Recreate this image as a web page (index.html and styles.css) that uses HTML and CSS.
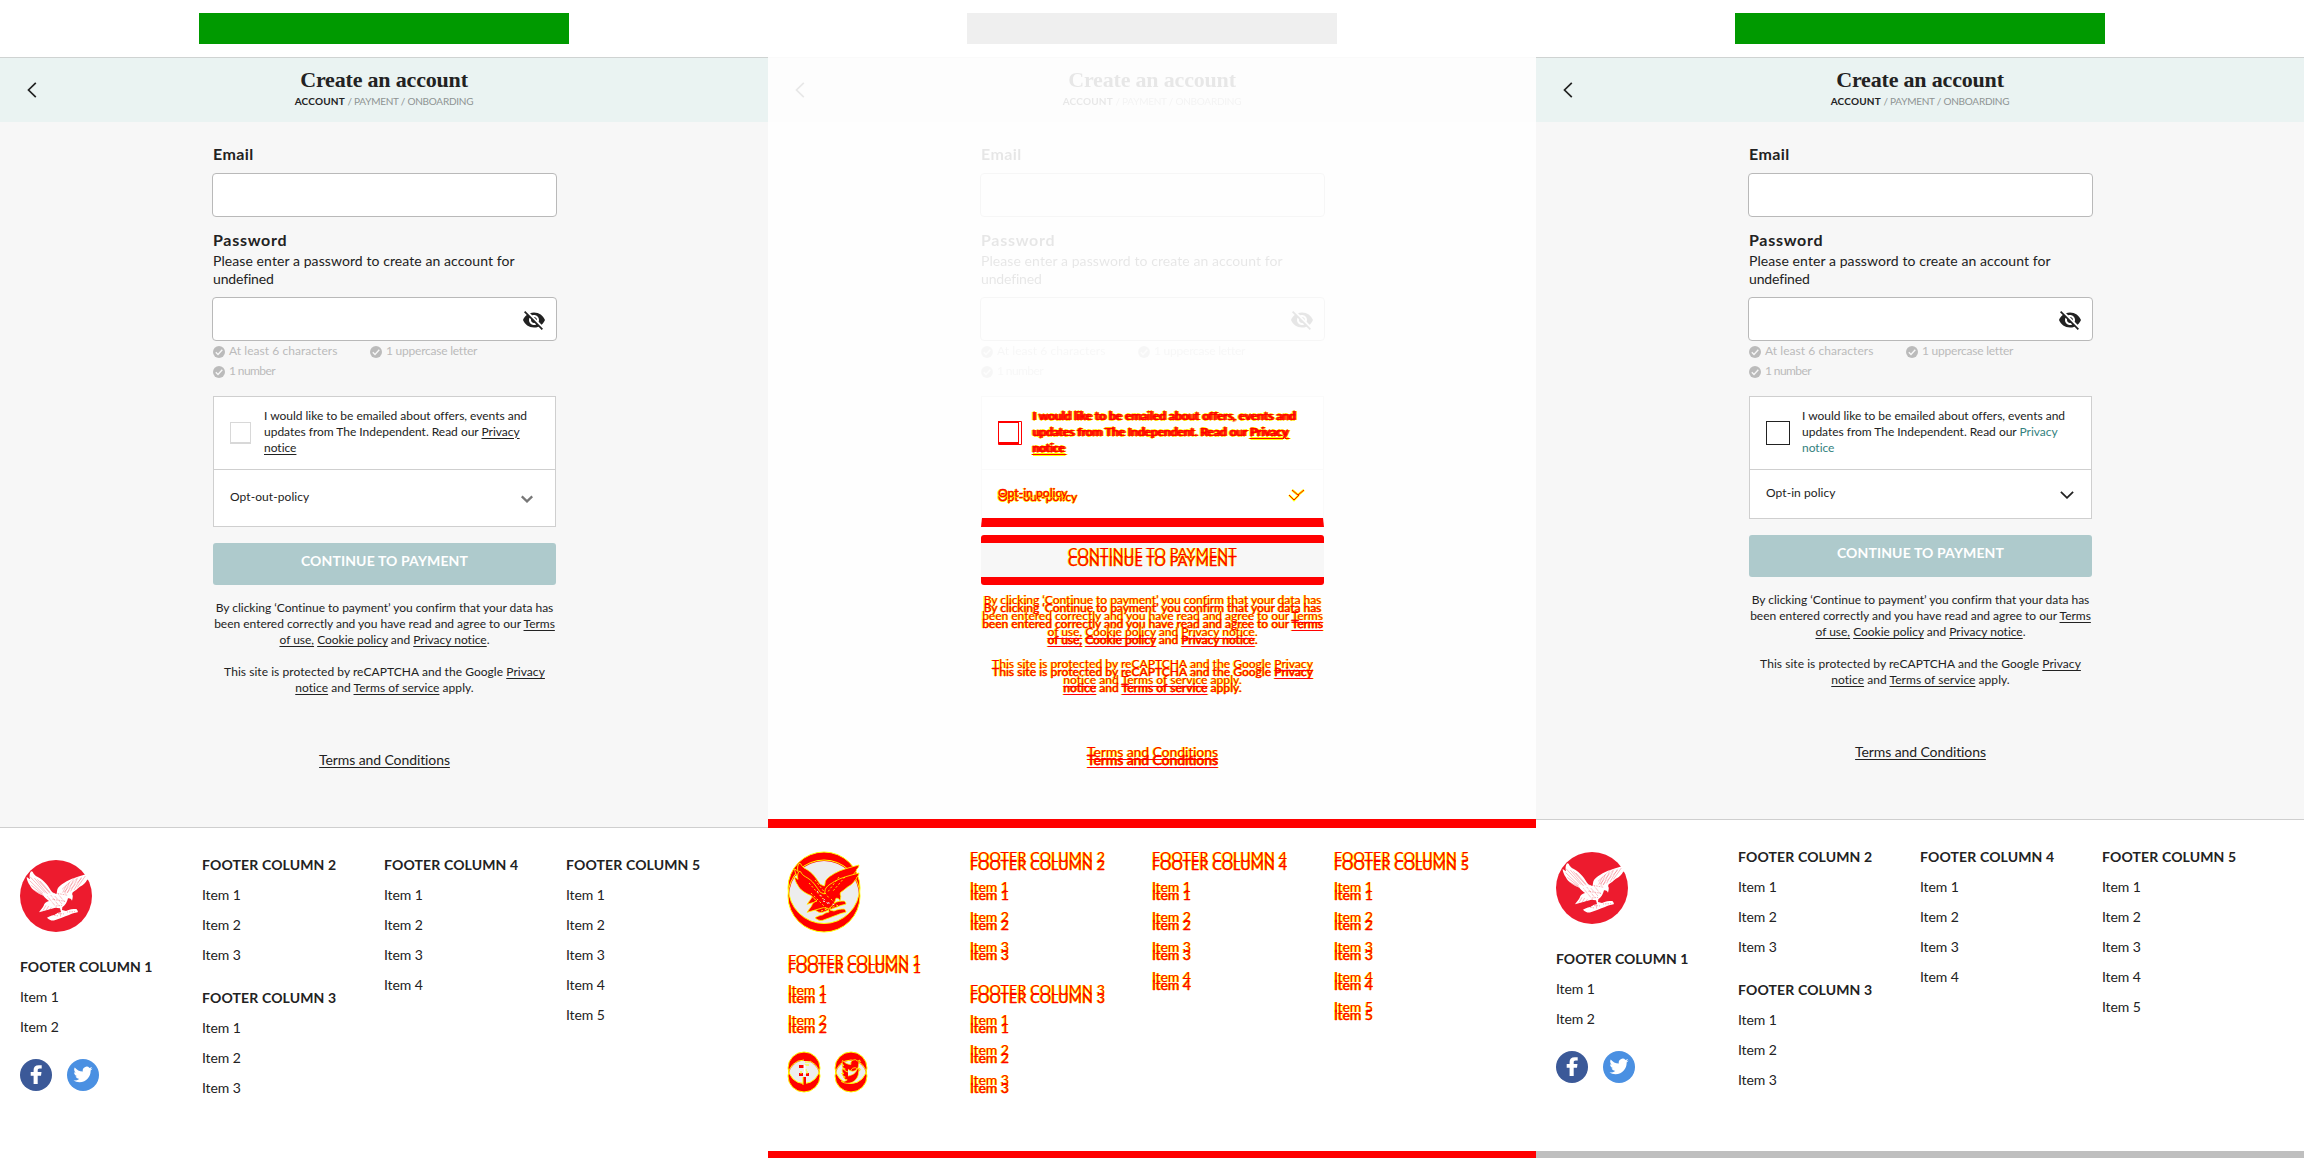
FILE: index.html
```html
<!DOCTYPE html>
<html lang="en">
<head>
<meta charset="utf-8">
<title>Create an account</title>
<link rel="stylesheet" href="styles.css">
</head>
<body>
<svg class="defs" aria-hidden="true">
  <symbol id="back" viewBox="0 0 10 16"><path d="M8.8.8 1.5 8l7.3 7.2" fill="none" stroke="#222" stroke-width="1.7"/></symbol>
  <symbol id="tick" viewBox="0 0 12 12"><circle cx="6" cy="6" r="6" fill="#bbb"/><path d="M2.8 6.2 5 8.4l4.3-4.6" fill="none" stroke="#f7f7f7" stroke-width="1.4"/></symbol>
  <symbol id="eye" viewBox="0 0 24 24"><path fill="#222" d="M12 7c2.76 0 5 2.24 5 5 0 .65-.13 1.26-.36 1.83l2.92 2.92c1.51-1.26 2.7-2.89 3.43-4.75-1.73-4.39-6-7.5-11-7.5-1.4 0-2.74.25-3.98.7l2.16 2.16C10.74 7.13 11.35 7 12 7zM2 4.27l2.28 2.28.46.46C3.08 8.3 1.78 10.02 1 12c1.73 4.39 6 7.5 11 7.5 1.55 0 3.03-.3 4.38-.84l.42.42L19.73 22 21 20.73 3.27 3 2 4.27zM7.53 9.8l1.55 1.55c-.05.21-.08.43-.08.65 0 1.66 1.34 3 3 3 .22 0 .44-.03.65-.08l1.55 1.55c-.67.33-1.41.53-2.2.53-2.76 0-5-2.24-5-5 0-.79.2-1.53.53-2.2zm4.31-.78 3.15 3.15.02-.16c0-1.66-1.34-3-3-3l-.17.01z"/></symbol>
  <symbol id="chevron" viewBox="0 0 14 8"><path d="M.9.9 7 6.8 13.1.9" fill="none" stroke="currentColor"/></symbol>
  <symbol id="eagle" viewBox="30 30 216 216">
    <path d="M68 65c3 7 8 12 14 15 11 6 20 13 27 22 7 8 12 18 18 25l12 5c3-6 1-12 5-18 6-9 17-14 26-20 20-12 45-17 73-25-1 8-4 10-7 13 0 6-6 9-8 13-6 10-17 13-24 20-5 5-11 8-17 13 1-1 1 2-1 4 3 3 3 10 0 20-3-6-7-8-12-7-3 12-8 21-17 27l-1 8 12 3c10-5 21-6 31-6 3 3 6 7 4 10-9 2-18 4-26 8-15 4-28 12-43 16-10 2-16-2-23-8 8-4 14-7 22-8 6-4 12-8 20-9l-3-11-14-2c-16 5-32 9-49 14 5-8 10-13 14-20 2-7 7-12 16-14-7-5-12-10-17-16-18-7-34-17-41-32-5-7-9-16-9-24 4 2 7 5 10 7-3-9-1-18 3-24z"/>
  </symbol>
  <symbol id="plumage" viewBox="30 30 216 216">
    <path fill="none" stroke="#ed1b2e" stroke-width=".9" d="m60 80 45 48M59 92l40 38M64 106l32 26M73 84l40 48M82 88l38 42M90 93l30 34M66 118l34 18M178 98l-14 32M190 91l-18 38M202 86l-20 38M214 82l-22 38M226 78l-24 34M170 104l-12 24M108 166l-9 16M116 168l-8 14M124 172l-8 12M150 186l2 14"/>
    <path fill="none" stroke="#ed1b2e" stroke-width="1.6" stroke-dasharray="2 3" d="m156 118 42-38M162 126l42-44M168 130l48-46M130 128l44 8M128 148l38 6M138 168l20-2M113 140l26 32M123 136l24 32M134 138l22 24M146 134l18 22M122 194l24 4M134 190l30 2M172 186l22-1"/>
  </symbol>
  <symbol id="logo" viewBox="0 0 72 72"><circle cx="36" cy="36" r="36" fill="#ed1b2e"/><use href="#eagle" width="72" height="72" fill="#fff"/><use href="#plumage" width="72" height="72"/></symbol>
  <symbol id="f" viewBox="0 0 32 32"><path d="M17.7 25v-8.3H21l.5-3.7h-3.8v-1.6c0-1.1.5-1.8 1.9-1.8h2.1V6.2h-3c-3.4 0-5.1 1.9-5.1 4.8v2h-2.9v3.7h2.9V25z"/></symbol>
  <symbol id="bird" viewBox="0 0 32 32"><path transform="translate(6.4 5.9) scale(.8)" d="M23.953 4.57a10 10 0 01-2.825.775 4.958 4.958 0 002.163-2.723c-.951.555-2.005.959-3.127 1.184a4.92 4.92 0 00-8.384 4.482C7.69 8.095 4.067 6.13 1.64 3.162a4.822 4.822 0 00-.666 2.475c0 1.71.87 3.213 2.188 4.096a4.904 4.904 0 01-2.228-.616v.06a4.923 4.923 0 003.946 4.827 4.996 4.996 0 01-2.212.085 4.936 4.936 0 004.604 3.417 9.867 9.867 0 01-6.102 2.105c-.39 0-.779-.023-1.17-.067a13.995 13.995 0 007.557 2.209c9.053 0 13.998-7.496 13.998-13.985 0-.21 0-.42-.015-.63A9.935 9.935 0 0024 4.59z"/></symbol>
  <symbol id="facebook" viewBox="0 0 32 32"><circle cx="16" cy="16" r="16" fill="#3b5998"/><use href="#f" width="32" height="32" fill="#fff"/></symbol>
  <symbol id="twitter" viewBox="0 0 32 32"><circle cx="16" cy="16" r="16" fill="#4a90e2"/><use href="#bird" width="32" height="32" fill="#fff"/></symbol>
  <clipPath id="clip-logo"><circle cx="37" cy="45" r="35"/></clipPath>
  <clipPath id="clip-social"><circle cx="17" cy="25" r="15.2"/></clipPath>
</svg>

<div class="panes">

<section class="pane">
  <div class="topbar"><div class="brand"></div></div>
  <header class="head">
    <svg class="back"><use href="#back"/></svg>
    <div class="heading"><h1>Create an account</h1><p class="steps"><b>ACCOUNT</b> <span>/ PAYMENT / ONBOARDING</span></p></div>
  </header>
  <main class="main">
    <div class="form">
      <div class="fields">
        <label class="label">Email</label>
        <div class="input"></div>
        <label class="label label-password">Password</label>
        <p class="hint">Please enter a password to create an account for<br><span class="hint-name">undefined</span></p>
        <div class="input"><svg class="eye"><use href="#eye"/></svg></div>
        <ul class="rules">
          <li><svg><use href="#tick"/></svg>At least 6 characters</li>
          <li class="tight"><svg><use href="#tick"/></svg>1 uppercase letter</li>
          <li class="tighter"><svg><use href="#tick"/></svg>1 number</li>
        </ul>
      </div>
      <div class="card">
        <div class="consent"><span class="check check-light"></span><p>I would like to be emailed about offers, events and<br>updates from The Independent. Read our <a>Privacy</a><br><a>notice</a></p></div>
        <div class="policy"><span>Opt-out-policy</span><svg class="chevron"><use href="#chevron"/></svg></div>
      </div>
      <div class="button">CONTINUE TO PAYMENT</div>
      <p class="legal">By clicking ‘Continue to payment’ you confirm that your data has<br>been entered correctly and you have read and agree to our <a>Terms</a><br><a>of use,</a> <a>Cookie policy</a> and <a>Privacy notice</a>.</p>
      <p class="legal legal-site">This site is protected by reCAPTCHA and the Google <a>Privacy</a><br><a>notice</a> and <a>Terms of service</a> apply.</p>
      <p class="terms"><a>Terms and Conditions</a></p>
    </div>
  </main>
  <footer class="footer">
    <div class="col"><svg class="logo"><use href="#logo"/></svg><h2>FOOTER COLUMN 1</h2><p>Item 1</p><p>Item 2</p><div class="social"><svg><use href="#facebook"/></svg><svg><use href="#twitter"/></svg></div></div>
    <div class="col"><h2>FOOTER COLUMN 2</h2><p>Item 1</p><p>Item 2</p><p>Item 3</p><h2 class="next">FOOTER COLUMN 3</h2><p>Item 1</p><p>Item 2</p><p>Item 3</p></div>
    <div class="col"><h2>FOOTER COLUMN 4</h2><p>Item 1</p><p>Item 2</p><p>Item 3</p><p>Item 4</p></div>
    <div class="col"><h2>FOOTER COLUMN 5</h2><p>Item 1</p><p>Item 2</p><p>Item 3</p><p>Item 4</p><p>Item 5</p></div>
  </footer>
</section>

<section class="pane diff">
  <div class="topbar ghost"><div class="brand"></div></div>
  <header class="head ghost">
    <svg class="back"><use href="#back"/></svg>
    <div class="heading"><h1>Create an account</h1><p class="steps"><b>ACCOUNT</b> <span>/ PAYMENT / ONBOARDING</span></p></div>
  </header>
  <main class="main">
    <div class="form">
      <div class="fields ghost">
        <label class="label">Email</label>
        <div class="input"></div>
        <label class="label label-password">Password</label>
        <p class="hint">Please enter a password to create an account for<br><span class="hint-name">undefined</span></p>
        <div class="input"><svg class="eye"><use href="#eye"/></svg></div>
        <ul class="rules">
          <li><svg><use href="#tick"/></svg>At least 6 characters</li>
          <li class="tight"><svg><use href="#tick"/></svg>1 uppercase letter</li>
          <li class="tighter"><svg><use href="#tick"/></svg>1 number</li>
        </ul>
      </div>
      <div class="card">
        <div class="consent"><svg class="check-diff" viewBox="0 0 24 24"><path fill="none" stroke="red" d="M.5.5h23v23H.5zM20.5 1v22"/><path stroke="red" stroke-width="2" d="M0 1h21M0 22h21"/></svg><p>I would like to be emailed about offers, events and<br>updates from The Independent. Read our <a>Privacy</a><br><a>notice</a></p></div>
        <div class="policy"><span class="names">Opt-out-policy<span class="name-new">Opt-in policy</span></span>
          <svg class="chevron-diff" viewBox="0 0 18 13"><path d="m1 6 5 5 5-5M4 1l6 5 6-5" fill="none" stroke="#ff0" stroke-width="2.4"/><path d="m1 6 5 5 5-5M4 1l6 5 6-5" fill="none" stroke="red"/></svg></div>
      </div>
      <div class="button">CONTINUE TO PAYMENT</div>
      <p class="legal">By clicking ‘Continue to payment’ you confirm that your data has<br>been entered correctly and you have read and agree to our <a>Terms</a><br><a>of use,</a> <a>Cookie policy</a> and <a>Privacy notice</a>.</p>
      <p class="legal legal-site">This site is protected by reCAPTCHA and the Google <a>Privacy</a><br><a>notice</a> and <a>Terms of service</a> apply.</p>
      <p class="terms"><a>Terms and Conditions</a></p>
    </div>
  </main>
  <footer class="footer">
    <div class="col">
      <svg class="logo" viewBox="0 0 74 82">
        <g fill="red" stroke="#ff0"><circle cx="37" cy="37" r="36"/><circle cx="37" cy="45" r="36"/></g>
        <g clip-path="url(#clip-logo)"><circle cx="37" cy="37" r="35.5" fill="#ededed" stroke="#ff0"/></g>
        <g fill="red" stroke="#ff0" stroke-width="2.5"><use href="#eagle" x="1" y="1" width="72" height="72"/><use href="#eagle" x="1" y="9" width="72" height="72"/></g>
        <path d="m22 32 14 16M28 29l14 18M24 42l18 18M52 26 40 42M58 26 46 40M34 60l18-6M44 48l8 8" stroke="#ff0" stroke-width=".9" stroke-dasharray="2 2"/>
        <path d="m30 40 12 14M36 50l12 4" stroke="#eee" stroke-dasharray="2 3"/>
      </svg>
      <h2>FOOTER COLUMN 1</h2><p>Item 1</p><p>Item 2</p>
      <div class="social">
        <svg viewBox="0 0 34 42"><g fill="red" stroke="#ff0"><circle cx="17" cy="17" r="16"/><circle cx="17" cy="25" r="16"/></g><g clip-path="url(#clip-social)"><circle cx="17" cy="17" r="15.5" fill="#ededed" stroke="#ff0"/></g><path fill="red" d="M12 14h5v3h-5zM12 22h4v3h-4zM19 22h3v3h-3zM16 26h3v8h-3zM17 8h6v2h-6z"/><path fill="none" stroke="#ff0" d="M18 11h5M18 14h4M16 19h4M14 20v3M20 20v3M16 26v8"/><path stroke="#fff" stroke-width="2" d="M17.5 14v9"/></svg>
        <svg viewBox="0 0 34 42"><g fill="red" stroke="#ff0"><circle cx="17" cy="17" r="16"/><circle cx="17" cy="25" r="16"/></g><g clip-path="url(#clip-social)"><circle cx="17" cy="17" r="15.5" fill="#ededed" stroke="#ff0"/></g><g fill="red" stroke="#ff0"><use href="#bird" x="1" y="1" width="32" height="32"/><use href="#bird" x="1" y="9" width="32" height="32"/></g><path d="M14 18c3 3 6 3 9 0-1 4-4 6-9 7" fill="#ededed" stroke="#ff0" stroke-width=".7"/></svg>
      </div>
    </div>
    <div class="col"><h2>FOOTER COLUMN 2</h2><p>Item 1</p><p>Item 2</p><p>Item 3</p><h2 class="next">FOOTER COLUMN 3</h2><p>Item 1</p><p>Item 2</p><p>Item 3</p></div>
    <div class="col"><h2>FOOTER COLUMN 4</h2><p>Item 1</p><p>Item 2</p><p>Item 3</p><p>Item 4</p></div>
    <div class="col"><h2>FOOTER COLUMN 5</h2><p>Item 1</p><p>Item 2</p><p>Item 3</p><p>Item 4</p><p>Item 5</p></div>
  </footer>
  <div class="strip"></div>
</section>

<section class="pane updated">
  <div class="topbar"><div class="brand"></div></div>
  <header class="head">
    <svg class="back"><use href="#back"/></svg>
    <div class="heading"><h1>Create an account</h1><p class="steps"><b>ACCOUNT</b> <span>/ PAYMENT / ONBOARDING</span></p></div>
  </header>
  <main class="main">
    <div class="form">
      <div class="fields">
        <label class="label">Email</label>
        <div class="input"></div>
        <label class="label label-password">Password</label>
        <p class="hint">Please enter a password to create an account for<br><span class="hint-name">undefined</span></p>
        <div class="input"><svg class="eye"><use href="#eye"/></svg></div>
        <ul class="rules">
          <li><svg><use href="#tick"/></svg>At least 6 characters</li>
          <li class="tight"><svg><use href="#tick"/></svg>1 uppercase letter</li>
          <li class="tighter"><svg><use href="#tick"/></svg>1 number</li>
        </ul>
      </div>
      <div class="card">
        <div class="consent"><span class="check"></span><p>I would like to be emailed about offers, events and<br>updates from The Independent. Read our <a>Privacy</a><br><a>notice</a></p></div>
        <div class="policy"><span>Opt-in policy</span><svg class="chevron"><use href="#chevron"/></svg></div>
      </div>
      <div class="button">CONTINUE TO PAYMENT</div>
      <p class="legal">By clicking ‘Continue to payment’ you confirm that your data has<br>been entered correctly and you have read and agree to our <a>Terms</a><br><a>of use,</a> <a>Cookie policy</a> and <a>Privacy notice</a>.</p>
      <p class="legal legal-site">This site is protected by reCAPTCHA and the Google <a>Privacy</a><br><a>notice</a> and <a>Terms of service</a> apply.</p>
      <p class="terms"><a>Terms and Conditions</a></p>
    </div>
  </main>
  <footer class="footer">
    <div class="col"><svg class="logo"><use href="#logo"/></svg><h2>FOOTER COLUMN 1</h2><p>Item 1</p><p>Item 2</p><div class="social"><svg><use href="#facebook"/></svg><svg><use href="#twitter"/></svg></div></div>
    <div class="col"><h2>FOOTER COLUMN 2</h2><p>Item 1</p><p>Item 2</p><p>Item 3</p><h2 class="next">FOOTER COLUMN 3</h2><p>Item 1</p><p>Item 2</p><p>Item 3</p></div>
    <div class="col"><h2>FOOTER COLUMN 4</h2><p>Item 1</p><p>Item 2</p><p>Item 3</p><p>Item 4</p></div>
    <div class="col"><h2>FOOTER COLUMN 5</h2><p>Item 1</p><p>Item 2</p><p>Item 3</p><p>Item 4</p><p>Item 5</p></div>
  </footer>
  <div class="strip"></div>
</section>

</div>
</body>
</html>
```
FILE: styles.css
```css
* { box-sizing: border-box; margin: 0; padding: 0; }
body { width: 2304px; background: #fff; color: #222; font-family: Lato, "Liberation Sans", sans-serif; white-space: nowrap; }
svg { display: block; flex: none; overflow: visible; }
.defs { position: absolute; width: 0; height: 0; }
.panes { display: grid; grid-template-columns: repeat(3, 768px); height: 1158px; overflow: hidden; }
.pane { display: flex; flex-direction: column; height: 1158px; min-width: 0; background: #fff; }

/* header */
.topbar { height: 58px; padding-top: 13px; background: #fff; border-bottom: 1px solid #cfd3d2; }
.brand { width: 370px; height: 31px; margin: 0 auto; background: #009a00; }
.head { display: grid; grid-template-columns: 37px 1fr 37px; align-items: center; height: 64px; background: #eaf3f2; }
.back { width: 10px; height: 16px; margin-left: 27px; }
.heading { padding-bottom: 5px; text-align: center; }
h1 { font: 700 22px/26px "Liberation Serif", serif; letter-spacing: -.18px; }
.steps { margin-top: 1px; font-size: 10px; line-height: 14px; color: #8e9392; }
.steps b { color: #222; letter-spacing: .19px; }
.steps span { letter-spacing: -.24px; }

/* form */
.main { padding: 22px 0 58px; background: #f7f7f7; }
.form { width: 343px; margin: 0 auto 0 213px; }
.label { display: block; font-size: 16px; font-weight: 700; line-height: 20px; letter-spacing: .4px; }
.label-password { margin-top: 13px; letter-spacing: .7px; }
.input { display: flex; justify-content: flex-end; height: 44px; margin: 9px -1px 0; padding: 10px 10px 0; background: #fff; border: 1px solid #b9b9b9; border-radius: 4px; }
.eye { width: 24px; height: 24px; }
.hint { margin-top: 2px; font-size: 14px; line-height: 18px; letter-spacing: .08px; }
.hint-name { letter-spacing: -.16px; }
.rules { display: grid; grid-template-columns: 157px 1fr; list-style: none; font-size: 12px; line-height: 20px; letter-spacing: .05px; color: #bbb; }
.rules li { display: flex; gap: 4px; }
.rules svg { width: 12px; height: 12px; margin-top: 5px; }
.rules .tight { letter-spacing: -.23px; }
.rules .tighter { letter-spacing: -.6px; }
.card { margin-top: 15px; background: #fff; border: 1px solid #cfcfcf; font-size: 12px; line-height: 16px; }
.consent { display: flex; align-items: center; gap: 13px; height: 73px; padding-left: 16px; border-bottom: 1px solid #cfcfcf; letter-spacing: -.02px; }
.consent p { padding-bottom: 3px; }
.check { flex: none; width: 24px; height: 24px; border: 1px solid #222; }
.check-light { width: 21px; height: 22px; border: 1px solid #d8d8d8; border-width: 1px 1px 2px; }
.policy { display: flex; align-items: center; justify-content: space-between; height: 56px; padding: 0 22px 2px 16px; letter-spacing: .07px; }
.chevron { width: 12px; height: 8px; margin-top: 4px; color: #777; stroke-width: 2.6; }
.button { height: 42px; margin-top: 16px; background: #aecacc; border-radius: 3px; color: #fff; font-size: 14px; font-weight: 700; line-height: 36px; letter-spacing: .12px; text-align: center; }
.legal { margin: 15px -10px 0; font-size: 12px; line-height: 16px; letter-spacing: -.01px; text-align: center; }
.legal-site { margin-top: 16px; letter-spacing: .05px; }
a { text-decoration: underline; text-underline-offset: 2px; text-decoration-thickness: 1px; }
.terms { margin-top: 55px; font-size: 14px; line-height: 18px; letter-spacing: -.1px; text-align: center; }

/* footer */
.footer { display: grid; grid-template-columns: repeat(4, 182px); padding: 22px 0 0 20px; border-top: 1px solid #cfcfcf; font-size: 14px; line-height: 30px; }
.footer h2 { font-size: 14px; font-weight: 700; letter-spacing: .14px; }
.footer p { letter-spacing: -.1px; }
.footer .logo + h2 { letter-spacing: 0; }
.footer .next { margin-top: 13px; }
.logo { width: 72px; height: 72px; margin: 10px 0 20px; }
.social { display: flex; gap: 15px; margin-top: 17px; }
.social svg { width: 32px; height: 32px; }
.strip { height: 7px; margin-top: auto; background: #bfbfbf; }

/* new version */
.updated .consent { gap: 12px; }
.updated .consent a { color: #33817e; text-decoration: none; }
.updated .policy { height: 48px; padding-right: 17px; }
.updated .chevron { width: 14px; margin-top: 3px; color: #222; stroke-width: 1.8; }

/* pixel difference between the two versions */
.ghost { filter: grayscale(1); opacity: .1; }
.diff .main { padding-bottom: 50px; background: #fefefe; }
.diff .card { height: 131px; border-color: #fafafa; border-bottom: 9px solid red; }
.diff .consent { gap: 10px; border-color: #fafafa; color: red; -webkit-text-stroke: .4px red; text-shadow: 1px 0 red, 2px 0 red, -1px 0 #ff0, 3px 0 #ff0, 1px -1px #ff0, 1px 1px #ff0; }
.check-diff { width: 24px; height: 24px; }
.diff .policy { height: 56px; padding-right: 17px; color: red; -webkit-text-stroke: .4px red; text-shadow: -1px 0 #ff0, 1px 0 #ff0, 0 1px #ff0; }
.names { position: relative; }
.name-new { position: absolute; left: 0; top: -4px; }
.chevron-diff { width: 18px; height: 13px; margin-top: -3px; }
.diff .button { height: 50px; margin-top: 8px; border: solid red; border-width: 8px 0; background: #f7f7f7; line-height: 36px; font-weight: 400; letter-spacing: .3px; }
.diff .button, .diff .legal, .diff .terms, .diff .footer { color: red; -webkit-text-stroke: .35px red; text-shadow: 0 -8px red, -.8px 0 #ff0, .8px 0 #ff0, -.8px -8px #ff0, .8px -8px #ff0; }
.diff .footer { border-top: 9px solid red; }
.diff .footer h2 { font-weight: 400; letter-spacing: .25px; }
.diff .footer .logo + h2 { letter-spacing: .1px; }
.diff .logo { width: 74px; height: 82px; margin: 1px 0 20px -1px; }
.diff .social { gap: 13px; margin: 8px 0 0 -1px; }
.diff .social svg { width: 34px; height: 42px; }
.diff .strip { background: red; }
```
